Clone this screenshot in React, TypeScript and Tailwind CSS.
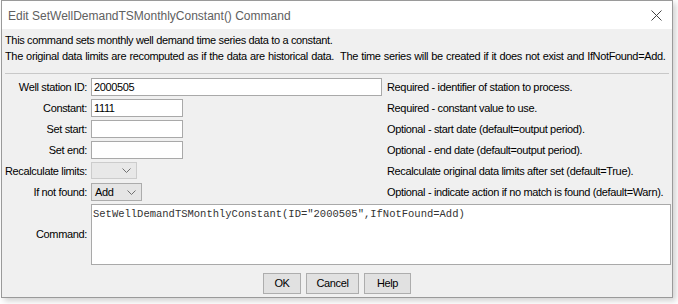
const ui = "font-['Tahoma','Liberation_Sans',sans-serif] text-[11px] tracking-[-0.35px] text-black";

function Chevron() {
  return (
    <svg width="9" height="5" viewBox="0 0 9 5" className="text-[#707070]">
      <path d="M0.5 0.5 L4.5 4.5 L8.5 0.5" fill="none" stroke="currentColor" strokeWidth="1" />
    </svg>
  );
}

function Label({ children }: { children: React.ReactNode }) {
  return <div className="flex items-center justify-end h-[18px] whitespace-nowrap">{children}</div>;
}

function Note({ children }: { children: React.ReactNode }) {
  return <div className="flex items-center h-[18px] pl-[1px] whitespace-nowrap">{children}</div>;
}

function Field({ value, width }: { value?: string; width: string }) {
  return (
    <div className={`h-[18px] ${width} bg-white border border-[#a9a9a9] flex items-center px-[2px]`}>
      {value}
    </div>
  );
}

export default function App() {
  return (
    <div className={`w-[678px] h-[304px] bg-white ${ui}`}>
      <div className="ml-px w-[672px] h-[298px] border border-[#9a9a9a] bg-[#f0f0f0] flex flex-col shadow-[3px_3px_6px_rgba(0,0,0,0.18)]">
        <div className="shrink-0 h-[28px] bg-white flex items-center justify-between pl-[6px] pr-[10px]">
          <span className="font-['Liberation_Sans',sans-serif] text-[12px] tracking-normal text-[#606060] pt-px">
            Edit SetWellDemandTSMonthlyConstant() Command
          </span>
          <svg width="11" height="11" viewBox="0 0 11 11">
            <path d="M0.5 0.5 L10.5 10.5 M10.5 0.5 L0.5 10.5" stroke="#444" strokeWidth="1" />
          </svg>
        </div>

        <div className="shrink-0 pt-[3px] pl-[3px] leading-[16px] whitespace-nowrap">
          <div>This command sets monthly well demand time series data to a constant.</div>
          <div className="[word-spacing:0.5px]">
            The original data limits are recomputed as if the data are historical data.&nbsp; The time series will be created if it does not exist and IfNotFound=Add.
          </div>
        </div>

        <div className="shrink-0 mt-[9px] mx-[3px] border-t border-[#c8c8c8]" />

        <div className="shrink-0 grid grid-cols-[85px_291px_1fr] gap-x-[4px] gap-y-[3px] pt-[4px] pr-[1px]">
          <Label>Well station ID:</Label>
          <Field value="2000505" width="w-[291px]" />
          <Note>Required - identifier of station to process.</Note>

          <Label>Constant:</Label>
          <Field value="1111" width="w-[92px]" />
          <Note>Required - constant value to use.</Note>

          <Label>Set start:</Label>
          <Field width="w-[92px]" />
          <Note>Optional - start date (default=output period).</Note>

          <Label>Set end:</Label>
          <Field width="w-[92px]" />
          <Note>Optional - end date (default=output period).</Note>

          <Label>Recalculate limits:</Label>
          <div className="h-[17px] w-[46px] bg-[#e8e8e8] border border-[#cccccc] flex items-center justify-end pr-[5px]">
            <Chevron />
          </div>
          <Note>Recalculate original data limits after set (default=True).</Note>

          <Label>If not found:</Label>
          <div className="h-[18px] w-[51px] bg-[#e5e5e5] border border-[#acacac] flex items-center justify-between pl-[3px] pr-[5px]">
            <span>Add</span>
            <Chevron />
          </div>
          <Note>Optional - indicate action if no match is found (default=Warn).</Note>

          <div className="flex items-center justify-end h-[61px]">Command:</div>
          <div className="col-span-2 h-[61px] bg-white border border-[#a9a9a9] px-[1px] pt-[2px] font-['Liberation_Mono',monospace] text-[10.5px] tracking-normal leading-[14px] text-[#333]">
            SetWellDemandTSMonthlyConstant(ID="2000505",IfNotFound=Add)
          </div>
        </div>

        <div className="shrink-0 flex justify-center gap-[5px] mt-[8px]">
          <button className="h-[21px] w-[38px] bg-[#e1e1e1] border border-[#adadad]">OK</button>
          <button className="h-[21px] w-[53px] bg-[#e1e1e1] border border-[#adadad]">Cancel</button>
          <button className="h-[21px] w-[47px] bg-[#e1e1e1] border border-[#adadad]">Help</button>
        </div>
      </div>
    </div>
  );
}
